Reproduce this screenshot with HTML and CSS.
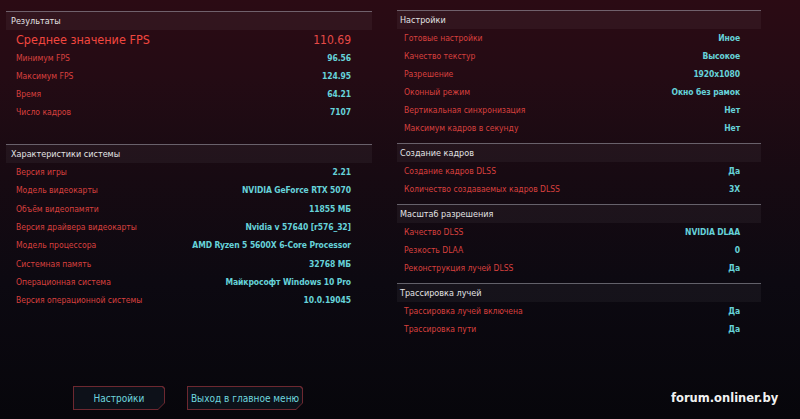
FILE: index.html
```html
<!DOCTYPE html>
<html lang="ru">
<head>
    <meta charset="UTF-8">
    <meta name="viewport" content="width=device-width, initial-scale=1.0">
    <title>Результаты теста производительности</title>
    <link rel="stylesheet" href="styles.css">
</head>
<body>
    <div class="screen">
        <div class="columns">
            <!-- Левая колонка -->
            <div class="panel panel-left">
                <div class="section section-results">
                    <div class="section-head">Результаты</div>
                    <div class="row row-main">
                        <span class="label">Среднее значение FPS</span>
                        <span class="value">110.69</span>
                    </div>
                    <div class="row"><span class="label">Минимум FPS</span><span class="value">96.56</span></div>
                    <div class="row"><span class="label">Максимум FPS</span><span class="value">124.95</span></div>
                    <div class="row"><span class="label">Время</span><span class="value">64.21</span></div>
                    <div class="row"><span class="label">Число кадров</span><span class="value">7107</span></div>
                </div>

                <div class="section section-system">
                    <div class="section-head">Характеристики системы</div>
                    <div class="row"><span class="label">Версия игры</span><span class="value">2.21</span></div>
                    <div class="row"><span class="label">Модель видеокарты</span><span class="value">NVIDIA GeForce RTX 5070</span></div>
                    <div class="row"><span class="label">Объём видеопамяти</span><span class="value">11855 МБ</span></div>
                    <div class="row"><span class="label">Версия драйвера видеокарты</span><span class="value">Nvidia v 57640 [r576_32]</span></div>
                    <div class="row"><span class="label">Модель процессора</span><span class="value">AMD Ryzen 5 5600X 6-Core Processor</span></div>
                    <div class="row"><span class="label">Системная память</span><span class="value">32768 МБ</span></div>
                    <div class="row"><span class="label">Операционная система</span><span class="value">Майкрософт Windows 10 Pro</span></div>
                    <div class="row"><span class="label">Версия операционной системы</span><span class="value">10.0.19045</span></div>
                </div>
            </div>

            <!-- Правая колонка -->
            <div class="panel panel-right">
                <div class="section">
                    <div class="section-head">Настройки</div>
                    <div class="row"><span class="label">Готовые настройки</span><span class="value">Иное</span></div>
                    <div class="row"><span class="label">Качество текстур</span><span class="value">Высокое</span></div>
                    <div class="row"><span class="label">Разрешение</span><span class="value">1920x1080</span></div>
                    <div class="row"><span class="label">Оконный режим</span><span class="value">Окно без рамок</span></div>
                    <div class="row"><span class="label">Вертикальная синхронизация</span><span class="value">Нет</span></div>
                    <div class="row"><span class="label">Максимум кадров в секунду</span><span class="value">Нет</span></div>
                </div>

                <div class="section">
                    <div class="section-head">Создание кадров</div>
                    <div class="row"><span class="label">Создание кадров DLSS</span><span class="value">Да</span></div>
                    <div class="row"><span class="label">Количество создаваемых кадров DLSS</span><span class="value">3X</span></div>
                </div>

                <div class="section">
                    <div class="section-head">Масштаб разрешения</div>
                    <div class="row"><span class="label">Качество DLSS</span><span class="value">NVIDIA DLAA</span></div>
                    <div class="row"><span class="label">Резкость DLAA</span><span class="value">0</span></div>
                    <div class="row"><span class="label">Реконструкция лучей DLSS</span><span class="value">Да</span></div>
                </div>

                <div class="section">
                    <div class="section-head">Трассировка лучей</div>
                    <div class="row"><span class="label">Трассировка лучей включена</span><span class="value">Да</span></div>
                    <div class="row"><span class="label">Трассировка пути</span><span class="value">Да</span></div>
                </div>
            </div>
        </div>

        <!-- Кнопки -->
        <div class="actions">
            <a class="btn btn-settings" href="#"><span class="btn-inner">Настройки</span></a>
            <a class="btn btn-exit" href="#"><span class="btn-inner">Выход в главное меню</span></a>
        </div>

        <div class="watermark">forum.onliner.by</div>
    </div>
</body>
</html>
```

FILE: styles.css
```css
body {
    margin: 0;
    width: 800px;
    height: 419px;
    overflow: hidden;
    background: linear-gradient(180deg, #2b0b14 0%, #240b14 18%, #170a12 42%, #0c0911 68%, #07060b 100%);
    font-family: "DejaVu Sans Condensed", "DejaVu Sans", sans-serif;
    font-stretch: condensed;
}
.screen {
    position: relative;
    height: 419px;
}
.columns {
    display: flex;
    align-items: flex-start;
}
.panel-left {
    width: 366px;
    margin-left: 6px;
    padding-top: 11px;
}
.panel-right {
    width: 364px;
    margin-left: 25px;
    padding-top: 10px;
}
.section {
    border-top: 1px solid rgba(170, 170, 180, 0.55);
    margin-bottom: 6px;
}
.section-results {
    margin-bottom: 23px;
}
.section-head {
    height: 18px;
    line-height: 19px;
    padding-left: 5px;
    font-size: 9px;
    color: #e2e2e4;
    background: rgba(255, 255, 255, 0.045);
}
.panel-right .section-head {
    padding-left: 3px;
}
.row {
    display: flex;
    justify-content: space-between;
    align-items: center;
    height: 18px;
    padding: 0 21px 0 10px;
    font-size: 8.5px;
}
.section-system .row {
    height: 18.3px;
}
.panel-right .row {
    padding-left: 7px;
}
.label {
    color: #d8403e;
}
.value {
    color: #66d2d9;
    font-weight: bold;
    letter-spacing: -0.1px;
}
.row-main {
    height: 19px;
}
.row-main .label {
    font-size: 12.5px;
    color: #f2473f;
}
.row-main .value {
    font-size: 12px;
    font-weight: normal;
    letter-spacing: 0;
    color: #e64a47;
}
.actions {
    display: flex;
    gap: 22px;
    margin-top: 42px;
    padding-left: 73px;
}
.btn {
    display: block;
    height: 24px;
    background: #6d2830;
    text-decoration: none;
    clip-path: polygon(0 0, calc(100% - 2px) 0, 100% 2px, 100% calc(100% - 7px), calc(100% - 7px) 100%, 0 100%);
}
.btn-inner {
    display: flex;
    justify-content: center;
    align-items: center;
    height: 22px;
    margin: 1px;
    background: #0d1119;
    color: #6fd6df;
    font-size: 10px;
    clip-path: polygon(0 0, calc(100% - 2px) 0, 100% 2px, 100% calc(100% - 6px), calc(100% - 6px) 100%, 0 100%);
}
.btn-settings {
    width: 92px;
}
.btn-exit {
    width: 116px;
}
.watermark {
    position: absolute;
    left: 671px;
    top: 391px;
    font-family: "DejaVu Sans", sans-serif;
    font-stretch: normal;
    font-weight: bold;
    font-size: 11.5px;
    color: #f2f2f2;
}
```
